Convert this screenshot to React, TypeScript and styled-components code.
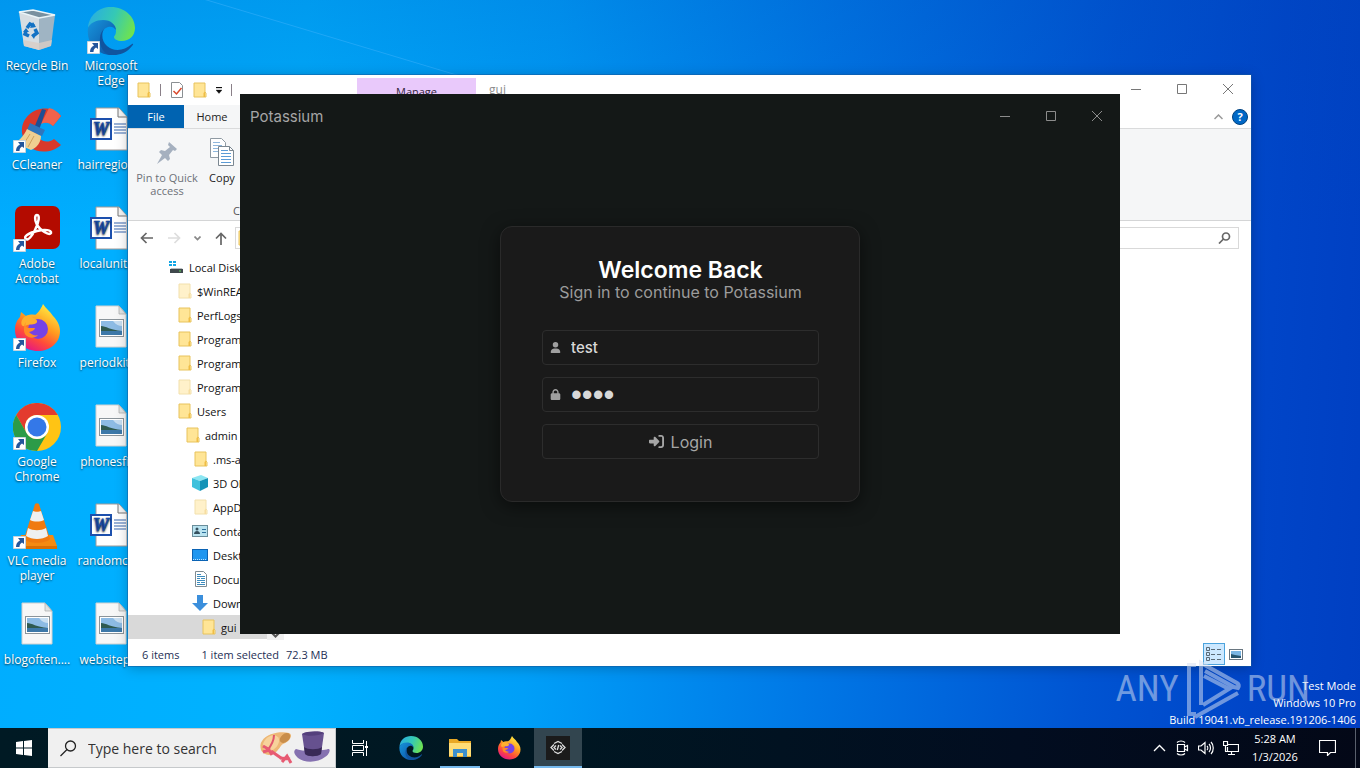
import React from "react";
import styled, { createGlobalStyle } from "styled-components";
import { FaUser, FaLock, FaRightToBracket } from "react-icons/fa6";

const GlobalStyle = createGlobalStyle`
  * { box-sizing: border-box; }
  body { margin: 0; font-family: "Open Sans", "Noto Sans", sans-serif; font-size: 11px; }
  button { font: inherit; color: inherit; background: none; border: 0; padding: 0; }
  h1, p, ul { margin: 0; padding: 0; }
  ul { list-style: none; }
  svg { display: block; flex: none; }
`;

/* ---------- desktop ---------- */

const Screen = styled.div`
  display: flex;
  flex-direction: column;
  min-height: 100vh;
  overflow: hidden;
  background:
    linear-gradient(180deg, rgba(0, 70, 180, 0.22) 0%, rgba(0, 80, 190, 0) 30%),
    linear-gradient(93deg, #00adff 0%, #00b2ff 22%, #009ff8 40%, #0078e6 60%, #0054d2 80%, #0045c8 92%, #003fc2 100%);
`;

const Desktop = styled.main`
  position: relative;
  flex: 1;
`;

const Ray = styled.svg`
  position: absolute;
  left: 180px;
  top: 0;
`;

const IconGrid = styled.ul`
  display: grid;
  grid-auto-flow: column;
  grid-template-rows: repeat(7, 99px);
  grid-auto-columns: 74px;
  justify-content: start;
`;

const Shortcut = styled.button`
  position: relative;
  display: flex;
  flex-direction: column;
  align-items: center;
  gap: 3px;
  width: 74px;
  padding-top: 7px;
  color: #fff;
  font-size: 12px;
  line-height: 15px;
  text-shadow: 0 1px 2px rgba(0, 0, 0, 0.7);
`;

const ArrowBadge = styled.svg`
  position: absolute;
  left: 13px;
  top: 41px;
`;

/* ---------- shared window parts ---------- */

const Spacer = styled.div`
  flex: 1;
`;

const CaptionButton = styled.button<{ $height: number }>`
  display: grid;
  place-items: center;
  width: 46px;
  height: ${(p) => p.$height}px;
`;

const CaptionGroup = styled.div<{ $color: string }>`
  display: flex;
  color: ${(p) => p.$color};
`;

/* ---------- explorer ---------- */

const ExplorerWindow = styled.section`
  position: absolute;
  left: 128px;
  right: 109px;
  top: 75px;
  bottom: 62px;
  display: flex;
  flex-direction: column;
  background: #fff;
  color: #111;
  box-shadow: 0 0 0 1px rgba(20, 90, 160, 0.5), 0 2px 12px rgba(0, 0, 0, 0.25);
`;

const ExplorerTitle = styled.header`
  display: flex;
  height: 30px;
`;

const QuickAccess = styled.div`
  display: flex;
  align-items: center;
  gap: 9px;
  width: 229px;
  padding-left: 9px;
`;

const Divider = styled.span`
  width: 1px;
  height: 12px;
  background: #8a8088;
`;

const ManageTab = styled.button`
  width: 119px;
  height: 27px;
  margin-top: 3px;
  background: #e9c9fb;
  color: #33263c;
`;

const FolderName = styled.span`
  padding: 6px 13px;
  color: #8d8d8d;
  font-size: 12px;
  line-height: 18px;
`;

const RibbonTabs = styled.nav`
  display: flex;
  align-items: center;
  height: 24px;
  border-bottom: 1px solid #dadbdc;
  padding-right: 3px;
`;

const RibbonTab = styled.button<{ $primary?: boolean }>`
  width: 56px;
  height: 23px;
  background: ${(p) => (p.$primary ? "#0063b1" : "#f5f6f7")};
  color: ${(p) => (p.$primary ? "#fff" : "#222")};
`;

const HelpBadge = styled.button`
  width: 16px;
  height: 16px;
  margin-left: 9px;
  border-radius: 50%;
  background: #0068c6;
  border: 1px solid #00427f;
  color: #fff;
  font-weight: 700;
  line-height: 14px;
`;

const Ribbon = styled.div`
  position: relative;
  display: flex;
  align-items: flex-start;
  gap: 4px;
  height: 92px;
  padding: 8px 4px;
  background: #f5f6f7;
  border-bottom: 1px solid #d4d5d6;
`;

const RibbonButton = styled.button<{ $width: number; $muted?: boolean }>`
  display: flex;
  flex-direction: column;
  align-items: center;
  gap: 2px;
  width: ${(p) => p.$width}px;
  line-height: 13px;
  color: ${(p) => (p.$muted ? "#6d7178" : "#222")};
`;

const RibbonGroupName = styled.span`
  position: absolute;
  left: 105px;
  bottom: 2px;
  line-height: 14px;
  color: #555;
`;

const AddressRow = styled.div`
  display: flex;
  align-items: center;
  height: 34px;
  padding: 0 12px;
`;

const NavButtons = styled.div`
  display: flex;
  align-items: center;
  gap: 13px;
  width: 95px;
`;

const AddressBox = styled.div`
  display: flex;
  align-items: center;
  flex: 1;
  height: 22px;
  padding: 0 2px;
  border: 1px solid #d9d9d9;
`;

const SearchBox = styled.label`
  display: flex;
  align-items: center;
  width: 220px;
  height: 22px;
  margin-left: 8px;
  padding-right: 7px;
  border: 1px solid #d9d9d9;
`;

const BareInput = styled.input`
  flex: 1;
  min-width: 0;
  height: 100%;
  border: 0;
  padding: 0;
  background: none;
  outline: 0;
  font: inherit;
  color: inherit;
`;

const ExplorerBody = styled.div`
  display: flex;
  flex: 1;
  min-height: 0;
  overflow: hidden;
`;

const Tree = styled.ul`
  width: 139px;
`;

const TreeItem = styled.li<{ $indent: number; $selected?: boolean; $faded?: boolean }>`
  display: flex;
  align-items: center;
  gap: 5px;
  height: 24px;
  padding-left: ${(p) => p.$indent}px;
  background: ${(p) => (p.$selected ? "#d9d9d9" : "transparent")};
  white-space: nowrap;
  overflow: hidden;
  svg { opacity: ${(p) => (p.$faded ? 0.5 : 1)}; }
`;

const Scrollbar = styled.div`
  display: flex;
  align-items: flex-end;
  justify-content: center;
  width: 17px;
  padding-bottom: 2px;
  background: #f0f0f0;
`;

const StatusBar = styled.footer`
  display: flex;
  align-items: center;
  height: 26px;
  padding: 2px 4px 0 14px;
  color: #1e2f55;
`;

const StatusText = styled.span<{ $gap: number }>`
  margin-right: ${(p) => p.$gap}px;
`;

const ViewButton = styled.button<{ $active?: boolean }>`
  display: grid;
  place-items: center;
  width: 22px;
  height: 22px;
  background: ${(p) => (p.$active ? "#cce8ff" : "transparent")};
  border: 1px solid ${(p) => (p.$active ? "#4ca3dd" : "transparent")};
`;

/* ---------- login window ---------- */

const LoginWindow = styled.section`
  position: absolute;
  left: 240px;
  right: 240px;
  top: 94px;
  bottom: 94px;
  display: flex;
  flex-direction: column;
  background: #141817;
  color: #a6a6a6;
  font-family: Inter, "Noto Sans", sans-serif;
`;

const LoginTitle = styled.header`
  display: flex;
  align-items: center;
  justify-content: space-between;
  height: 44px;
  padding-left: 10px;
  font-size: 15px;
`;

const LoginBody = styled.div`
  display: grid;
  place-items: center;
  flex: 1;
  padding-bottom: 44px;
`;

const Card = styled.form`
  display: flex;
  flex-direction: column;
  gap: 12px;
  width: 360px;
  padding: 30px 40px 42px 41px;
  background: #1a1a1a;
  border: 1px solid #2a2a2a;
  border-radius: 12px;
  box-shadow: 0 4px 18px rgba(0, 0, 0, 0.5);
`;

const CardHeading = styled.div`
  margin-bottom: 17px;
  text-align: center;
  white-space: nowrap;
`;

const Heading = styled.h1`
  font-size: 23px;
  line-height: 26px;
  font-weight: 600;
  color: #fff;
`;

const SubHeading = styled.p`
  font-size: 16px;
  line-height: 18px;
  color: #9c9c9c;
`;

const Field = styled.label`
  display: flex;
  align-items: center;
  gap: 10px;
  height: 35px;
  padding: 0 7px;
  border: 1px solid #2d2d2d;
  border-radius: 4px;
  font-size: 15px;
  font-weight: 500;
  color: #d8d8d8;
  svg { color: #a0a0a0; }
`;

const PasswordInput = styled(BareInput)`
  font-family: "Liberation Sans", Arial, sans-serif;
  font-weight: 400;
  font-size: 31px;
`;

const LoginButton = styled.button`
  display: flex;
  align-items: center;
  justify-content: center;
  gap: 7px;
  height: 35px;
  border: 1px solid #2d2d2d;
  border-radius: 4px;
  font-size: 16px;
`;

/* ---------- watermark ---------- */

const Brand = styled.div`
  position: absolute;
  right: 50px;
  bottom: 9px;
  display: flex;
  align-items: center;
  gap: 5px;
  color: #d5dff2;
  opacity: 0.52;
  font-family: "Liberation Sans Narrow", "Roboto Condensed", "Liberation Sans", sans-serif;
  font-size: 37px;
  line-height: 60px;
`;

const BuildInfo = styled.p`
  position: absolute;
  right: 4px;
  bottom: 0;
  color: #fff;
  line-height: 17px;
  text-align: right;
`;

/* ---------- taskbar ---------- */

const Taskbar = styled.footer`
  display: flex;
  height: 40px;
  background: linear-gradient(90deg, #001a24 0%, #001722 40%, #020d20 75%, #030817 100%);
  color: #fff;
`;

const TaskButton = styled.button<{ $open?: boolean; $active?: boolean }>`
  display: grid;
  place-items: center;
  width: 48px;
  margin-right: 1px;
  background: ${(p) => (p.$active ? "#32454f" : "transparent")};
  background-image: ${(p) =>
    p.$open || p.$active ? "linear-gradient(#76b9ed, #76b9ed)" : "none"};
  background-repeat: no-repeat;
  background-position: bottom;
  background-size: ${(p) => (p.$active ? "48px" : "40px")} 2px;
`;

const TaskSearch = styled.label`
  display: flex;
  align-items: center;
  gap: 11px;
  width: 288px;
  padding: 0 4px 0 12px;
  margin-left: -1px;
  background: #f0f0f0;
  border: 1px solid #c6c9cb;
  border-left: 0;
  color: #333;
  font-size: 14px;
  input::placeholder { color: #333; opacity: 1; }
`;

const TaskApps = styled.div`
  display: flex;
  margin-left: 2px;
`;

const Tray = styled.div`
  display: flex;
  align-items: center;
  gap: 8px;
`;

const Clock = styled.time`
  width: 48px;
  margin-left: 4px;
  text-align: center;
  line-height: 18px;
`;

const Notifications = styled.button`
  display: grid;
  place-items: center;
  width: 40px;
  height: 40px;
`;

const ShowDesktop = styled.button`
  width: 5px;
  height: 40px;
  border-left: 1px solid #59606c;
`;

/* ---------- icons ---------- */

const FolderIcon = () => (
  <svg width="14" height="16" viewBox="0 0 14 16">
    <path d="M1 1h11v9l1 1v4H1z" fill="#ffe596" stroke="#e8c35c" strokeWidth="1" />
    <path d="M10.500 15v-4l1.500-1.500v5.500z" fill="#f0bd45" />
  </svg>
);

const RecycleIcon = () => (
  <svg width="48" height="48" viewBox="0 0 48 48">
    <path d="M6 5l5 34 15 4V9z" fill="#d6dde2" />
    <path d="M26 9v34l12-4 4-31z" fill="#9fb4c3" />
    <path d="M6 5l14-2 22 5-16 3z" fill="#78909f" stroke="#eaf4f8" strokeWidth="1.500" />
    <path d="M10 33l1 6 15 4v-7zM26 36v7l12-4 1-6z" fill="#d8cdc5" opacity=".8" />
    <g fill="none" stroke="#1372c4" strokeWidth="3.500">
      <path d="M14 21l3-4 4 2M22 22l2 4-4 3M16 29l-4-2 1-3" />
    </g>
    <path d="M20 15l3 5-6 1zM21 32l-3-4 5-2zM10 25l3-4 3 4z" fill="#1372c4" />
  </svg>
);

const EdgeIcon = ({ size = 48, id }: { size?: number; id: string }) => (
  <svg width={size} height={size} viewBox="0 0 48 48">
    <defs>
      <linearGradient id={id + "a"} x1="0" x2="1" y1=".3" y2=".6">
        <stop offset="0" stopColor="#2aaee0" />
        <stop offset=".5" stopColor="#35c9b4" />
        <stop offset="1" stopColor="#70e34d" />
      </linearGradient>
      <linearGradient id={id + "b"} x1="0" x2="1" y1="0" y2="1">
        <stop offset="0" stopColor="#1795dc" />
        <stop offset="1" stopColor="#0b4da0" />
      </linearGradient>
    </defs>
    <path d="M1 21C2 8 12 0 24 0c14 0 24 10 24 21 0 8-6 13-13 13-5 0-8-2-8-4 0-1 2-2 2-6 0-5-5-10-12-10C9 14 3 17 1 21z" fill={"url(#" + id + "a)"} />
    <path d="M1 21c2-5 8-8 15-8 8 0 13 5 13 10-2-3-5-4-8-3-6 2-8 9-6 16 2 6 6 10 12 12C11 49-1 37 1 21z" fill={"url(#" + id + "b)"} />
    <path d="M17 22c-3 5-2 13 3 17 7 6 17 5 25-2 2-1 1 1 0 2-5 7-14 10-22 9-7-2-11-10-10-17 0-4 2-7 4-9z" fill="#10549f" />
  </svg>
);

const CCleanerIcon = () => (
  <svg width="48" height="48" viewBox="0 0 48 48">
    <path d="M48 10l-8 10c-5-6-14-5-16 4-1 10 9 15 17 9l7 6C36 50 12 48 9 27 7 6 34-6 48 10z" fill="#d9392b" />
    <path d="M48 10l-8 10c-4-4-8-4-12-2L36 2c5 1 9 4 12 8z" fill="#f0634c" />
    <path d="M29 3l4 1-7 20-5-2z" fill="#1e4f94" />
    <path d="M17 17l15 7-3 6-15-6z" fill="#2f76bd" />
    <path d="M14 23l14 7c0 6-4 12-10 14L2 37c6-4 9-8 12-14z" fill="#f0cf91" />
    <path d="M17 28l-7 11M21 30l-6 11" stroke="#cf9f5c" />
  </svg>
);

const AcrobatIcon = () => (
  <svg width="48" height="48" viewBox="0 0 48 48">
    <rect x="2" y="1" width="45" height="43" rx="7" fill="#b30b00" />
    <path d="M13 34c-3-2 2-6 11-8 8-2 15-1 14 2-2 3-11-3-14-8-3-6-2-10 0-10 3 0 2 7-2 15-3 6-7 11-9 9z" fill="none" stroke="#fff" strokeWidth="2.500" />
  </svg>
);

const FirefoxIcon = ({ size = 48, id }: { size?: number; id: string }) => (
  <svg width={size} height={size} viewBox="0 0 48 48">
    <defs>
      <linearGradient id={id} x1=".8" x2=".3" y1=".1" y2="1">
        <stop offset="0" stopColor="#ffe640" />
        <stop offset=".4" stopColor="#ff9a1f" />
        <stop offset=".7" stopColor="#ff4b3a" />
        <stop offset="1" stopColor="#e31587" />
      </linearGradient>
    </defs>
    <path d="M30 0c3 5 7 7 10 12 4 4 7 9 7 15 0 12-10 20-22 20C12 47 2 38 2 26c0-6 2-10 5-13l1-5 5 4c2-1 5-1 7 0 4-1 8-7 10-12z" fill={"url(#" + id + ")"} />
    <circle cx="25" cy="25" r="10" fill="#7542e5" />
    <path d="M14 21c4-1 9 0 10-3 1-2-3-4-5-5 4-1 7-1 10 0-7-4-17-3-20 3-2 5 1 8 5 5z" fill="#ffb02e" />
    <path d="M13 18c-2 4 1 6 4 6h5c-1 3-3 3-6 4 3 3 6 4 9 3-4 5-14 3-14-5 0-3 0-6 2-8z" fill="#ff8a26" />
  </svg>
);

const ChromeIcon = () => (
  <svg width="48" height="48" viewBox="0 0 48 48">
    <circle cx="24" cy="24" r="24" fill="#ffc414" />
    <path d="M3.200 12A24 24 0 0 1 44.800 12H24a12 12 0 0 0-10.400 18z" fill="#e33b2e" />
    <path d="M3.200 12A24 24 0 0 0 24 48l10.400-18a12 12 0 0 1-20.800 0z" fill="#2b9b48" />
    <circle cx="24" cy="24" r="12" fill="#fff" />
    <circle cx="24" cy="24" r="9.500" fill="#3478e8" />
  </svg>
);

const VlcIcon = () => (
  <svg width="48" height="48" viewBox="0 0 48 48">
    <path d="M8 33h32l4 11v3H4v-3z" fill="#f58a12" />
    <path d="M4 44h40v3H4z" fill="#d96f05" />
    <path d="M22 2c1-1 3-1 4 0l11 35c-4 5-22 5-26 0z" fill="#f07a10" />
    <path d="M20 9c2 1 6 1 8 0l3 9c-4 2-10 2-14 0zM15 26c5 3 13 3 18 0l2 8c-6 4-16 4-22 0z" fill="#eef0f1" />
  </svg>
);

const WordIcon = () => (
  <svg width="48" height="48" viewBox="0 0 48 48">
    <path d="M9 2h23l8 9v33H9z" fill="#fff" stroke="#a19a98" />
    <path d="M31 2v9h9" fill="#f4f4f4" stroke="#777" />
    <path d="M27 18h12M27 21h12M27 24h12M27 27h12" stroke="#3767b0" strokeWidth="1.200" />
    <rect x="4" y="13" width="20" height="20" fill="#fff" stroke="#1d50ad" strokeWidth="2" />
    <text x="14" y="29" textAnchor="middle" fontFamily="Liberation Serif" fontWeight="700" fontStyle="italic" fontSize="18" fill="#1d50ad" stroke="#1d50ad" strokeWidth=".7">W</text>
  </svg>
);

const PictureIcon = () => (
  <svg width="48" height="48" viewBox="0 0 48 48">
    <path d="M9 2h23l7 8v33H9z" fill="#f7f7f7" stroke="#d0d0d0" />
    <path d="M32 2v8h7z" fill="#dfe3e3" stroke="#aaa" strokeWidth=".7" />
    <rect x="12.500" y="15.500" width="24" height="17" fill="#fff" stroke="#8b949a" />
    <rect x="14" y="17" width="21" height="14" fill="#8dbbe4" />
    <path d="M14 17h12c3 4 6 5 9 5v-5z" fill="#c9dff2" />
    <path d="M14 22c5 0 9 4 21 5v1H14z" fill="#2f5a50" />
    <path d="M14 27h21v4H14z" fill="#3d78a8" />
  </svg>
);

const DriveIcon = () => (
  <svg width="16" height="14" viewBox="0 0 16 14">
    <path d="M1 1h3v2H1zM5 1h3v2H5zM1 4h3v2H1zM5 4h3v2H5z" fill="#11a5e4" />
    <path d="M3 8h11l1 2H2z" fill="#b7bcbf" />
    <path d="M2 9h13v4H2z" fill="#3f484c" />
    <path d="M11 11h2" stroke="#63d65c" />
  </svg>
);

const CubeIcon = () => (
  <svg width="16" height="16" viewBox="0 0 16 16">
    <path d="M0 3l9-3 7 3-8 3z" fill="#8ce6f2" />
    <path d="M0 3l8 3v10l-8-4z" fill="#3fc1dc" />
    <path d="M8 6l8-3v9l-8 4z" fill="#1593b7" />
  </svg>
);

const ContactsIcon = () => (
  <svg width="16" height="12" viewBox="0 0 16 12">
    <rect x=".5" y=".5" width="15" height="11" fill="#b9e3f0" stroke="#6a8d9a" />
    <circle cx="5" cy="4" r="1.500" fill="#34505e" />
    <path d="M2 9c0-4 6-4 6 0z" fill="#34505e" />
    <path d="M10 4.500h4M10 7.500h4" stroke="#2d6f9b" />
  </svg>
);

const DesktopIcon = () => (
  <svg width="16" height="12" viewBox="0 0 16 12">
    <rect x=".5" y=".5" width="15" height="11" fill="#1e96f0" stroke="#0b63b4" />
    <path d="M1 10.500h14" stroke="#bde2ff" strokeDasharray="1 1" />
  </svg>
);

const DocumentIcon = () => (
  <svg width="14" height="16" viewBox="0 0 14 16">
    <path d="M1.500.5h8l3 3v12h-11z" fill="#fff" stroke="#7f8b92" />
    <path d="M3 3.500h4M3 5.500h8M3 7.500h3M7 7.500h4M3 9.500h8M3 11.500h3M3 13.500h8M7 11.500h4" stroke="#3e8cbd" />
  </svg>
);

const DownloadIcon = () => (
  <svg width="16" height="16" viewBox="0 0 16 16">
    <path d="M5 0h6v8h5l-8 8-8-8h5z" fill="#3b8fdc" />
  </svg>
);

const PinIcon = () => (
  <svg width="26" height="32" viewBox="0 0 26 32">
    <path d="M15 5l8 7-2 2-2-1-4 5 1 4-2 2-9-9 2-2 4 1 5-4-2-2zM8 18l3 3-8 6z" fill="#a5b0bf" />
  </svg>
);

const CopyIcon = () => (
  <svg width="26" height="32" viewBox="0 0 26 32">
    <path d="M1.500 1.500h11l4 4v15h-15z" fill="#fff" stroke="#8f9aa3" />
    <path d="M4 5.500h7M4 8.500h9M4 11.500h9M4 14.500h9" stroke="#8fb7dd" />
    <path d="M9.500 9.500h11l4 4v15h-15z" fill="#fff" stroke="#7b8791" />
    <path d="M20.500 9.500v4h4" fill="none" stroke="#7b8791" />
    <path d="M12 13.500h7M12 16.500h10M12 19.500h10M12 22.500h10M12 25.500h10" stroke="#5b9bd5" />
  </svg>
);

const StrokeIcon = ({ w, h, d, width = 1, color = "currentColor" }: { w: number; h: number; d: string; width?: number; color?: string }) => (
  <svg width={w} height={h} viewBox={`0 0 ${w} ${h}`} fill="none" stroke={color} strokeWidth={width}>
    <path d={d} />
  </svg>
);

const HatsArt = () => (
  <svg width="72" height="36" viewBox="0 0 72 36">
    <path d="M3 11C8 3 22 1 30 3c5 2 0 9-6 11-3 2-4 6-8 9-6 4-12 1-14-3-1-4-1-6 1-9z" fill="#edb775" />
    <path d="M6 10c5-6 12-6 14-1 1 5-4 11-10 13-6-1-8-7-4-12z" fill="#f7d29b" />
    <ellipse cx="26" cy="8" rx="6" ry="4" fill="#c98e4b" transform="rotate(-40 26 8)" />
    <path d="M15 5c0 6-3 11-7 16" fill="none" stroke="#e0556c" strokeWidth="2" />
    <path d="M4 16l7 4M4 22l6-2 3 5M12 21l10 7" fill="none" stroke="#e75a72" strokeWidth="3" />
    <path d="M21 28l10 1M23 32l5-6 4 7" fill="none" stroke="#e75a72" strokeWidth="3" />
    <path d="M37 19c7 3 26 2 32 0 3-1 2 5-3 8-7 6-21 6-27 1-4-4-5-7-2-9z" fill="#8571b0" />
    <path d="M43 4c5-3 18-3 22-1l-3 21c-4 3-13 3-16 0z" fill="#66518f" />
    <path d="M45 17c4 3 14 3 18 0l-1 7c-4 3-13 3-16 0z" fill="#392957" />
    <path d="M43 4c5-3 18-3 22-1-5 3-17 4-22 1z" fill="#54407c" />
  </svg>
);

const ExplorerIcon = () => (
  <svg width="22" height="20" viewBox="0 0 22 20">
    <path d="M0 1h8l2 2h12v16H0z" fill="#e9a825" />
    <path d="M0 5h22v13H0z" fill="#ffdc75" />
    <path d="M4 19v-8h14v8h-4v-4H8v4z" fill="#3c8fcd" />
  </svg>
);

const CodeAppIcon = () => (
  <svg width="24" height="24" viewBox="0 0 24 24" fill="none" stroke="#dedede" strokeWidth="1.300">
    <path d="M0 0h24v24H0z" fill="#1b1b1b" stroke="none" />
    <path d="M8 7.500l4-2 4 2M8 15.500l4 2 4-2M8 8.500L5 11.500l3 3M16 8.500l3 3-3 3M10 9.500l-2 2 2 2M14 9.500l2 2-2 2M12.700 9l-1.400 5" />
  </svg>
);

const ViewDetailsIcon = () => (
  <svg width="16" height="14" viewBox="0 0 16 14" fill="none" stroke="#5a6a76">
    <path d="M.5.5h3v3h-3zM.5 5.500h3v3h-3zM.5 10.500h3v3h-3zM5 2.500h4M11 2.500h4M5 7.500h4M11 7.500h4M5 12.500h4M11 12.500h4" />
  </svg>
);

const ViewLargeIcon = () => (
  <svg width="14" height="11" viewBox="0 0 14 11">
    <rect x=".5" y=".5" width="13" height="10" fill="#fff" stroke="#697680" />
    <path d="M2 2h10v7H2z" fill="#7bb6e3" />
    <path d="M2 5l4 1 6 1v2H2z" fill="#28556d" />
  </svg>
);

const BrandMark = () => (
  <svg width="58" height="60" viewBox="0 0 58 60" fill="none" stroke="currentColor" strokeWidth="4">
    <path d="M12 6H5v49h7M17 46V4l36 20q3 2 1 5l-4-1L21 12M20 17l25 13-26 16M11 58l43-24" />
  </svg>
);

/* ---------- data ---------- */

type DesktopEntry = { label: string; icon: React.ReactNode; shortcut?: boolean };

const desktopEntries: DesktopEntry[] = [
  { label: "Recycle Bin", icon: <RecycleIcon /> },
  { label: "CCleaner", icon: <CCleanerIcon />, shortcut: true },
  { label: "Adobe Acrobat", icon: <AcrobatIcon />, shortcut: true },
  { label: "Firefox", icon: <FirefoxIcon id="fxDesk" />, shortcut: true },
  { label: "Google Chrome", icon: <ChromeIcon />, shortcut: true },
  { label: "VLC media player", icon: <VlcIcon />, shortcut: true },
  { label: "blogoften....", icon: <PictureIcon /> },
  { label: "Microsoft Edge", icon: <EdgeIcon id="edgeDesk" />, shortcut: true },
  { label: "hairregion...", icon: <WordIcon /> },
  { label: "localunits...", icon: <WordIcon /> },
  { label: "periodkit....", icon: <PictureIcon /> },
  { label: "phonesfi....", icon: <PictureIcon /> },
  { label: "randomco...", icon: <WordIcon /> },
  { label: "websitepl...", icon: <PictureIcon /> },
];

type TreeEntry = { label: string; indent: number; icon?: React.ReactNode; faded?: boolean; selected?: boolean };

const treeEntries: TreeEntry[] = [
  { label: "Local Disk (C:)", indent: 40, icon: <DriveIcon /> },
  { label: "$WinREAgent", indent: 50, faded: true },
  { label: "PerfLogs", indent: 50 },
  { label: "Program Files", indent: 50 },
  { label: "Program Files (x86)", indent: 50 },
  { label: "ProgramData", indent: 50, faded: true },
  { label: "Users", indent: 50 },
  { label: "admin", indent: 58 },
  { label: ".ms-ad", indent: 66 },
  { label: "3D Objects", indent: 64, icon: <CubeIcon /> },
  { label: "AppData", indent: 66, faded: true },
  { label: "Contacts", indent: 64, icon: <ContactsIcon /> },
  { label: "Desktop", indent: 64, icon: <DesktopIcon /> },
  { label: "Documents", indent: 66, icon: <DocumentIcon /> },
  { label: "Downloads", indent: 64, icon: <DownloadIcon /> },
  { label: "gui", indent: 74, selected: true },
];

const Caption = ({ color, height }: { color: string; height: number }) => (
  <CaptionGroup $color={color}>
    <CaptionButton $height={height} aria-label="Minimize">
      <StrokeIcon w={10} h={10} d="M0 5.500h10" />
    </CaptionButton>
    <CaptionButton $height={height} aria-label="Maximize">
      <StrokeIcon w={10} h={10} d="M.5.5h9v9H.5z" />
    </CaptionButton>
    <CaptionButton $height={height} aria-label="Close">
      <StrokeIcon w={10} h={10} d="M0 0l10 10M10 0L0 10" />
    </CaptionButton>
  </CaptionGroup>
);

const Explorer = () => (
  <ExplorerWindow>
    <ExplorerTitle>
      <QuickAccess>
        <FolderIcon />
        <Divider />
        <svg width="14" height="16" viewBox="0 0 14 16">
          <path d="M1.500.5h8l3 3v12h-11z" fill="#fff" stroke="#8a8f92" />
          <path d="M3.500 9l3 3 5-6" fill="none" stroke="#d9482b" strokeWidth="1.500" />
        </svg>
        <FolderIcon />
        <svg width="6" height="7" viewBox="0 0 6 7">
          <path d="M0 0h6v1H0zM0 3h6L3 6.500z" fill="#111" stroke="#111" strokeWidth=".3" />
        </svg>
        <Divider />
      </QuickAccess>
      <ManageTab>Manage</ManageTab>
      <FolderName>gui</FolderName>
      <Spacer />
      <Caption color="#777" height={28} />
    </ExplorerTitle>
    <RibbonTabs>
      <RibbonTab $primary>File</RibbonTab>
      <RibbonTab>Home</RibbonTab>
      <Spacer />
      <StrokeIcon w={9} h={6} d="M.5 5l4-4 4 4" color="#999" width={1.5} />
      <HelpBadge aria-label="Help">?</HelpBadge>
    </RibbonTabs>
    <Ribbon>
      <RibbonButton $width={70} $muted>
        <PinIcon />
        Pin to Quick access
      </RibbonButton>
      <RibbonButton $width={32}>
        <CopyIcon />
        Copy
      </RibbonButton>
      <RibbonGroupName>Clipboard</RibbonGroupName>
    </Ribbon>
    <AddressRow>
      <NavButtons>
        <StrokeIcon w={14} h={12} d="M13 6H2M6.500 1L1.500 6l5 5" width={1.7} color="#666" />
        <StrokeIcon w={14} h={12} d="M1 6h11M7.500 1l5 5-5 5" width={1.7} color="#ddd" />
        <StrokeIcon w={7} h={5} d="M.5.5l3 3 3-3" width={1.7} color="#888" />
        <StrokeIcon w={14} h={13} d="M7 13V2M2 6.500l5-5 5 5" width={1.7} color="#666" />
      </NavButtons>
      <AddressBox>
        <FolderIcon />
      </AddressBox>
      <SearchBox>
        <BareInput aria-label="Search gui" />
        <svg width="13" height="12" viewBox="0 0 13 12" fill="none" stroke="#666" strokeWidth="1.700">
          <circle cx="8" cy="4.500" r="3.500" />
          <path d="M5.500 7L1 11.500" />
        </svg>
      </SearchBox>
    </AddressRow>
    <ExplorerBody>
      <Tree>
        {treeEntries.map((entry) => (
          <TreeItem key={entry.label} $indent={entry.indent} $selected={entry.selected} $faded={entry.faded}>
            {entry.icon ?? <FolderIcon />}
            {entry.label}
          </TreeItem>
        ))}
      </Tree>
      <Scrollbar>
        <StrokeIcon w={9} h={6} d="M.5.5l4 4 4-4" width={2} color="#555" />
      </Scrollbar>
    </ExplorerBody>
    <StatusBar>
      <StatusText $gap={22}>6 items</StatusText>
      <StatusText $gap={7}>1 item selected</StatusText>
      <StatusText $gap={0}>72.3 MB</StatusText>
      <Spacer />
      <ViewButton $active aria-label="Details">
        <ViewDetailsIcon />
      </ViewButton>
      <ViewButton aria-label="Large icons">
        <ViewLargeIcon />
      </ViewButton>
    </StatusBar>
  </ExplorerWindow>
);

const Login = () => (
  <LoginWindow>
    <LoginTitle>
      <span>Potassium</span>
      <Caption color="#8c8c8c" height={44} />
    </LoginTitle>
    <LoginBody>
      <Card onSubmit={(e) => e.preventDefault()}>
        <CardHeading>
          <Heading>Welcome Back</Heading>
          <SubHeading>Sign in to continue to Potassium</SubHeading>
        </CardHeading>
        <Field>
          <FaUser size={11} />
          <BareInput aria-label="Username" defaultValue="test" />
        </Field>
        <Field>
          <FaLock size={11} />
          <PasswordInput aria-label="Password" type="password" defaultValue="test" />
        </Field>
        <LoginButton type="submit">
          <FaRightToBracket size={15} />
          Login
        </LoginButton>
      </Card>
    </LoginBody>
  </LoginWindow>
);

export default function App() {
  return (
    <Screen>
      <GlobalStyle />
      <Desktop>
        <Ray width="300" height="80" viewBox="0 0 300 80" fill="none" stroke="#4db8ff" opacity=".4">
          <path d="M0-8L280 76" />
        </Ray>
        <IconGrid>
          {desktopEntries.map((entry) => (
            <li key={entry.label}>
              <Shortcut>
                {entry.icon}
                {entry.shortcut && (
                  <ArrowBadge width="13" height="13" viewBox="0 0 13 13">
                    <path d="M.5.5h12v12H.5z" fill="#fff" stroke="#c5d3dd" />
                    <path d="M5 2h6v6L9 6.500C7 8 6.500 9 6.500 11H3c0-3 1-5 4-6.500z" fill="#24569c" />
                  </ArrowBadge>
                )}
                {entry.label}
              </Shortcut>
            </li>
          ))}
        </IconGrid>
        <Explorer />
        <Login />
        <BuildInfo>
          Test Mode
          <br />
          Windows 10 Pro
          <br />
          Build 19041.vb_release.191206-1406
        </BuildInfo>
        <Brand>
          <span>ANY</span>
          <BrandMark />
          <span>RUN</span>
        </Brand>
      </Desktop>
      <Taskbar>
        <TaskButton aria-label="Start">
          <svg width="16" height="16" viewBox="0 0 16 16" fill="#fff">
            <path d="M0 2l7-1v6.500H0zM8 1l8-1v7.500H8zM0 8.500h7V15l-7-1zM8 8.500h8V16l-8-1z" />
          </svg>
        </TaskButton>
        <TaskSearch>
          <svg width="17" height="17" viewBox="0 0 17 17" fill="none" stroke="#222" strokeWidth="1.300">
            <circle cx="10.500" cy="6" r="5" />
            <path d="M7 9.500L.5 16" />
          </svg>
          <BareInput aria-label="Search" placeholder="Type here to search" />
          <HatsArt />
        </TaskSearch>
        <TaskButton aria-label="Task view">
          <StrokeIcon w={16} h={16} d="M.5 0v3.500h11V0M.5 5.500h11v5H.5zM.5 16v-3.500h11V16M14.500 1v15M13 6.500h3M13 7.500h3" />
        </TaskButton>
        <TaskApps>
          <TaskButton aria-label="Edge">
            <EdgeIcon size={24} id="edgeTask" />
          </TaskButton>
          <TaskButton $open aria-label="File Explorer">
            <ExplorerIcon />
          </TaskButton>
          <TaskButton aria-label="Firefox">
            <FirefoxIcon size={24} id="fxTask" />
          </TaskButton>
          <TaskButton $active aria-label="Potassium">
            <CodeAppIcon />
          </TaskButton>
        </TaskApps>
        <Spacer />
        <Tray>
          <StrokeIcon w={13} h={16} d="M1 11l5.500-5.500L12 11" width={1.3} />
          <StrokeIcon w={16} h={16} d="M3.500 4.500h7v7h-7zM10.500 7l3-1.500v5l-3-1.500M3 2.500c2-2 6-2 8 0M3 13.500c2 2 6 2 8 0" width={1.2} />
          <StrokeIcon w={17} h={16} d="M.5 6v4H3l4 3.500v-11L3 6zM9 6c1 1 1 3 0 4M11 4c2 2 2 6 0 8M13 2c3 3 3 9 0 12" width={1.2} />
          <StrokeIcon w={16} h={16} d="M5 4.500h10.500v7h-11V7M.5 1.500h4v4h-4zM2.500 5.500v6M2 11.500h3M8.500 12v2.500M5 14.500h7" width={1.2} />
          <Clock>
            5:28 AM
            <br />
            1/3/2026
          </Clock>
          <Notifications aria-label="Notifications">
            <StrokeIcon w={17} h={16} d="M.5.5h16v12h-5L8.500 15.500V12.500H.5z" width={1.2} />
          </Notifications>
          <ShowDesktop aria-label="Show desktop" />
        </Tray>
      </Taskbar>
    </Screen>
  );
}
